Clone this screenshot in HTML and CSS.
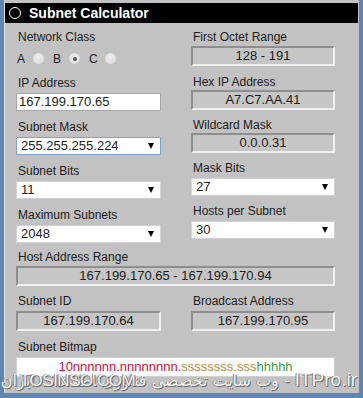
FILE: index.html
```html
<!DOCTYPE html>
<html>
<head>
<meta charset="utf-8">
<link rel="stylesheet" href="styles.css">
</head>
<body>
<div class="frame">
  <div class="panel">
    <div class="titlebar">
      <span class="ring"></span>
      <span class="title">Subnet Calculator</span>
    </div>
    <div class="content">
      <div class="top">
        <div class="stack left">
          <div class="field f-class">
            <div class="label">Network Class</div>
            <div class="radios">
              <span class="rl">A</span><span class="radio"></span>
              <span class="rl">B</span><span class="radio on"></span>
              <span class="rl">C</span><span class="radio"></span>
            </div>
          </div>
          <div class="field">
            <div class="label">IP Address</div>
            <div class="input">167.199.170.65</div>
          </div>
          <div class="field">
            <div class="label">Subnet Mask</div>
            <div class="select focus"><span>255.255.255.224</span><i class="arrow"></i></div>
          </div>
          <div class="field">
            <div class="label">Subnet Bits</div>
            <div class="select"><span>11</span><i class="arrow"></i></div>
          </div>
          <div class="field">
            <div class="label">Maximum Subnets</div>
            <div class="select"><span>2048</span><i class="arrow"></i></div>
          </div>
        </div>
        <div class="stack right">
          <div class="field f-first">
            <div class="label">First Octet Range</div>
            <div class="out">128 - 191</div>
          </div>
          <div class="field">
            <div class="label">Hex IP Address</div>
            <div class="out">A7.C7.AA.41</div>
          </div>
          <div class="field">
            <div class="label">Wildcard Mask</div>
            <div class="out">0.0.0.31</div>
          </div>
          <div class="field">
            <div class="label">Mask Bits</div>
            <div class="select"><span>27</span><i class="arrow"></i></div>
          </div>
          <div class="field">
            <div class="label">Hosts per Subnet</div>
            <div class="select"><span>30</span><i class="arrow"></i></div>
          </div>
        </div>
      </div>
      <div class="field full host">
        <div class="label">Host Address Range</div>
        <div class="out">167.199.170.65 - 167.199.170.94</div>
      </div>
      <div class="pair">
        <div class="field">
          <div class="label">Subnet ID</div>
          <div class="out">167.199.170.64</div>
        </div>
        <div class="field">
          <div class="label">Broadcast Address</div>
          <div class="out">167.199.170.95</div>
        </div>
      </div>
      <div class="field full bitmap">
        <div class="label">Subnet Bitmap</div>
        <div class="bits"><span class="net">10nnnnnn.nnnnnnnn.</span><span class="sub">ssssssss.sss</span><span class="hst">hhhhh</span></div>
      </div>
    </div>
  </div>
  <div class="wm-fa" dir="rtl"><span class="wm-lat">ITPro.ir</span> - وب سایت تخصصی فناوری اطلاعات ایران</div>
  <div class="wm-en">TOSINSO.COM</div>
</div>
</body>
</html>
```
FILE: styles.css
```css
html, body {
  margin: 0;
  padding: 0;
}
body {
  font-family: "Liberation Sans", Arial, sans-serif;
  color: #1c1c1c;
  overflow: hidden;
}
.frame {
  position: relative;
  width: 363px;
  height: 398px;
  background: #5f86b2;
  overflow: hidden;
}
.panel {
  margin-left: 4px;
  width: 355px;
  height: 393px;
  box-sizing: border-box;
  background: #c2c2c2;
  border-left: 1px solid #dedede;
  padding-top: 3px;
}
.titlebar {
  height: 20px;
  margin-right: 1px;
  background: #000;
  display: flex;
  align-items: center;
  padding-left: 4px;
  gap: 8px;
}
.ring {
  width: 10px;
  height: 10px;
  border: 1.5px solid #fff;
  border-radius: 50%;
}
.title {
  color: #fff;
  font-weight: bold;
  font-size: 14px;
  line-height: 20px;
}
.content {
  padding: 7px 0 0 11px;
}
.top {
  display: flex;
  align-items: flex-start;
  gap: 30px;
}
.stack {
  display: flex;
  flex-direction: column;
}
.stack.left {
  width: 145px;
  gap: 9px;
}
.stack.right {
  width: 144px;
  gap: 8px;
}
.field {
  display: flex;
  flex-direction: column;
}
.label {
  font-size: 12px;
  line-height: 14px;
  padding-left: 2px;
  margin-bottom: 3px;
  white-space: nowrap;
}
.f-class {
  height: 37px;
}
.f-first {
  height: 37px;
}
.right .field .label {
  margin-bottom: 1px;
}
.right .f-first .label {
  margin-bottom: 2px;
}
.right .field .select {
  margin-top: 2px;
}
.radios {
  display: flex;
  align-items: center;
  height: 13px;
  margin-top: 5px;
  font-size: 12px;
  padding-left: 1px;
}
.rl {
  width: 8px;
  margin-right: 8px;
  text-align: center;
}
.radio {
  width: 11px;
  height: 11px;
  border-radius: 50%;
  background: radial-gradient(circle at 50% 40%, #f0f0f0 0%, #dcdcdc 70%, #cfcfcf 100%);
  margin-right: 9px;
  position: relative;
}
.radio.on::after {
  content: "";
  position: absolute;
  left: 3.5px;
  top: 3.5px;
  width: 4px;
  height: 4px;
  border-radius: 50%;
  background: #555;
}
.input {
  height: 18px;
  box-sizing: border-box;
  background: #fff;
  border: 1px solid #a8a8a8;
  font-size: 13px;
  line-height: 16px;
  padding-left: 2px;
}
.select {
  height: 18px;
  box-sizing: border-box;
  background: #fff;
  border: 1px solid #d2d2d2;
  font-size: 13px;
  line-height: 16px;
  padding-left: 4px;
  padding-right: 6px;
  display: flex;
  align-items: center;
  justify-content: space-between;
}
.select.focus {
  border-color: #7fa3d1;
}
.arrow {
  width: 0;
  height: 0;
  border-left: 3.5px solid transparent;
  border-right: 3.5px solid transparent;
  border-top: 6px solid #000;
}
.out {
  height: 20px;
  box-sizing: border-box;
  border: 2px solid;
  border-color: #8e8e8e #efefef #efefef #8e8e8e;
  background: #c6c6c6;
  font-size: 13px;
  line-height: 16px;
  text-align: center;
  white-space: nowrap;
}
.full {
  width: 319px;
}
.host {
  margin-top: 7px;
}
.host .label {
  margin-bottom: 2px;
}
.pair {
  display: flex;
  gap: 30px;
  margin-top: 8px;
}
.pair .field:first-child {
  width: 145px;
}
.pair .field:last-child {
  width: 144px;
}
.bitmap {
  margin-top: 9px;
}
.bits {
  height: 20px;
  box-sizing: border-box;
  background: #fff;
  border: 1px solid #d0d0d0;
  font-size: 13px;
  line-height: 18px;
  text-align: center;
  white-space: nowrap;
}
.net { color: #d0103a; }
.sub { color: #c48a3e; }
.hst { color: #3f9a3f; }
.wm-fa {
  position: absolute;
  right: 6px;
  top: 369px;
  font-family: "DejaVu Sans", sans-serif;
  font-size: 16px;
  color: rgba(255, 255, 255, 0.92);
  text-shadow: 1px 1px 0 #6a6a6a, -1px 0 0 #8a8a8a;
  white-space: nowrap;
}
.wm-lat {
  font-family: "Liberation Sans", sans-serif;
  font-size: 19px;
}
.wm-en {
  position: absolute;
  left: 20px;
  top: 371px;
  font-family: "Liberation Sans", sans-serif;
  font-size: 17px;
  letter-spacing: -0.5px;
  color: rgba(255, 255, 255, 0.92);
  text-shadow: 1px 1px 0 #6a6a6a, -1px 0 0 #8a8a8a;
  white-space: nowrap;
}
```
